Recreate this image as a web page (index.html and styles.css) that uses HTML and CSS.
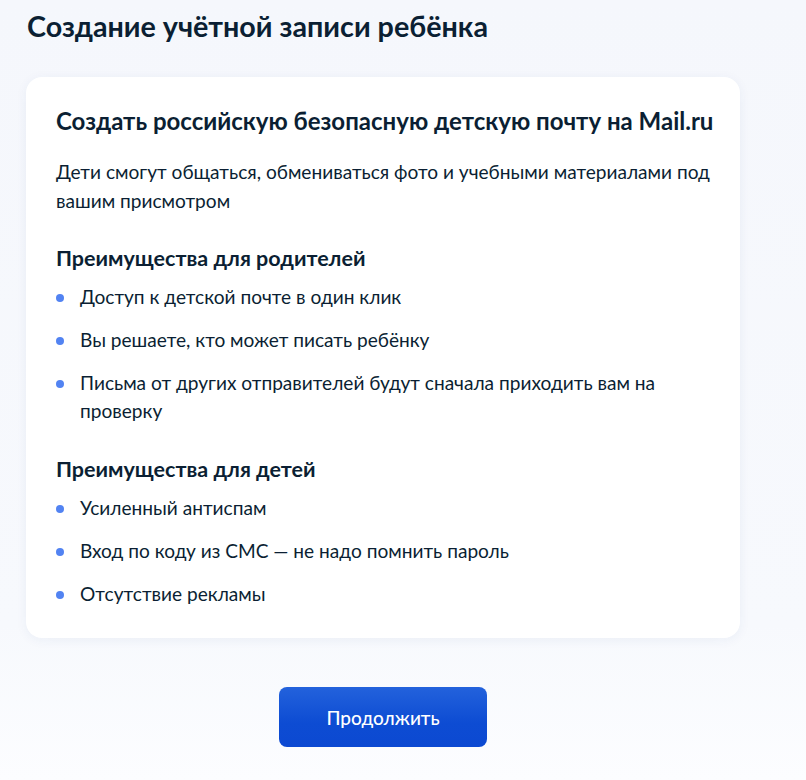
FILE: index.html
```html
<!DOCTYPE html>
<html lang="ru">
<head>
<meta charset="utf-8">
<title>Создание учётной записи ребёнка</title>
<link rel="stylesheet" href="styles.css">
</head>
<body>
<main class="page">
  <h1 class="page-title">Создание учётной записи ребёнка</h1>
  <section class="card">
    <h2 class="card-title">Создать российскую безопасную детскую почту на Mail.ru</h2>
    <p class="card-text">Дети смогут общаться, обмениваться фото и учебными материалами под вашим присмотром</p>
    <h3 class="section-title">Преимущества для родителей</h3>
    <ul class="benefits">
      <li>Доступ к детской почте в один клик</li>
      <li>Вы решаете, кто может писать ребёнку</li>
      <li>Письма от других отправителей будут сначала приходить вам на проверку</li>
    </ul>
    <h3 class="section-title section-title--next">Преимущества для детей</h3>
    <ul class="benefits">
      <li>Усиленный антиспам</li>
      <li>Вход по коду из СМС — не надо помнить пароль</li>
      <li>Отсутствие рекламы</li>
    </ul>
  </section>
  <div class="actions">
    <button class="btn-primary" type="button">Продолжить</button>
  </div>
</main>
</body>
</html>
```

FILE: styles.css
```css
* { box-sizing: border-box; }
html, body { margin: 0; padding: 0; }
body {
  font-family: Lato, "Noto Sans", sans-serif;
  color: #0b1f33;
  background: linear-gradient(180deg, #f5f7fc 0%, #f7f9fd 80%, #fcfdff 100%);
  min-height: 780px;
}
.page {
  width: 714px;
  margin-left: 26px;
  padding-top: 8px;
}
.page-title {
  margin: 0;
  font-size: 28.7px;
  line-height: 36px;
  font-weight: 700;
  padding-left: 1px;
}
.card {
  margin-top: 33px;
  background: #fff;
  border-radius: 16px;
  padding: 29px 20px 30px 30px;
  box-shadow: 0 2px 12px rgba(34, 60, 140, 0.06);
}
.card-title {
  margin: 0;
  font-size: 24px;
  line-height: 30px;
  font-weight: 700;
  white-space: nowrap;
}
.card-text {
  margin: 21px 0 0;
  font-size: 19.1px;
  line-height: 29px;
  font-weight: 400;
}
.section-title {
  margin: 28px 0 0;
  font-size: 21.5px;
  line-height: 30px;
  font-weight: 700;
}
.section-title--next { margin-top: 29px; }
.benefits {
  list-style: none;
  margin: 10px 0 0;
  padding: 0;
  display: flex;
  flex-direction: column;
  gap: 15px;
}
.benefits li {
  position: relative;
  padding-left: 24px;
  font-size: 19.1px;
  line-height: 28px;
}
.benefits li::before {
  content: "";
  position: absolute;
  left: 0;
  top: 11px;
  width: 8px;
  height: 8px;
  border-radius: 50%;
  background: #5283f2;
}
.actions {
  display: flex;
  justify-content: center;
  margin-top: 49px;
}
.btn-primary {
  width: 208px;
  height: 60px;
  border: 0;
  border-radius: 8px;
  background: linear-gradient(180deg, #2362dc 0%, #0d4cd3 60%, #0c49d2 100%);
  color: #fff;
  font-family: Lato, "Noto Sans", sans-serif;
  font-size: 19px;
  font-weight: 500;
  cursor: pointer;
}
```
